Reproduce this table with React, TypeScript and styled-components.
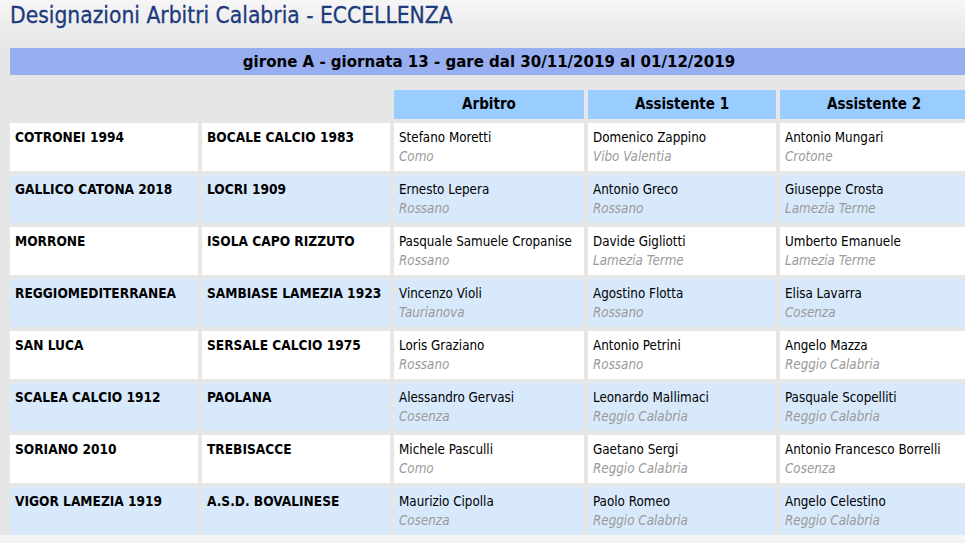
import styled, { createGlobalStyle } from 'styled-components'

type Official = { name: string; city: string }
type Match = { home: string; away: string; ref: Official; as1: Official; as2: Official }

const matches: Match[] = [
  {
    home: 'COTRONEI 1994',
    away: 'BOCALE CALCIO 1983',
    ref: { name: 'Stefano Moretti', city: 'Como' },
    as1: { name: 'Domenico Zappino', city: 'Vibo Valentia' },
    as2: { name: 'Antonio Mungari', city: 'Crotone' },
  },
  {
    home: 'GALLICO CATONA 2018',
    away: 'LOCRI 1909',
    ref: { name: 'Ernesto Lepera', city: 'Rossano' },
    as1: { name: 'Antonio Greco', city: 'Rossano' },
    as2: { name: 'Giuseppe Crosta', city: 'Lamezia Terme' },
  },
  {
    home: 'MORRONE',
    away: 'ISOLA CAPO RIZZUTO',
    ref: { name: 'Pasquale Samuele Cropanise', city: 'Rossano' },
    as1: { name: 'Davide Gigliotti', city: 'Lamezia Terme' },
    as2: { name: 'Umberto Emanuele', city: 'Lamezia Terme' },
  },
  {
    home: 'REGGIOMEDITERRANEA',
    away: 'SAMBIASE LAMEZIA 1923',
    ref: { name: 'Vincenzo Violi', city: 'Taurianova' },
    as1: { name: 'Agostino Flotta', city: 'Rossano' },
    as2: { name: 'Elisa Lavarra', city: 'Cosenza' },
  },
  {
    home: 'SAN LUCA',
    away: 'SERSALE CALCIO 1975',
    ref: { name: 'Loris Graziano', city: 'Rossano' },
    as1: { name: 'Antonio Petrini', city: 'Rossano' },
    as2: { name: 'Angelo Mazza', city: 'Reggio Calabria' },
  },
  {
    home: 'SCALEA CALCIO 1912',
    away: 'PAOLANA',
    ref: { name: 'Alessandro Gervasi', city: 'Cosenza' },
    as1: { name: 'Leonardo Mallimaci', city: 'Reggio Calabria' },
    as2: { name: 'Pasquale Scopelliti', city: 'Reggio Calabria' },
  },
  {
    home: 'SORIANO 2010',
    away: 'TREBISACCE',
    ref: { name: 'Michele Pasculli', city: 'Como' },
    as1: { name: 'Gaetano Sergi', city: 'Reggio Calabria' },
    as2: { name: 'Antonio Francesco Borrelli', city: 'Cosenza' },
  },
  {
    home: 'VIGOR LAMEZIA 1919',
    away: 'A.S.D. BOVALINESE',
    ref: { name: 'Maurizio Cipolla', city: 'Cosenza' },
    as1: { name: 'Paolo Romeo', city: 'Reggio Calabria' },
    as2: { name: 'Angelo Celestino', city: 'Reggio Calabria' },
  },
]

const GlobalStyle = createGlobalStyle`
  html, body {
    margin: 0;
    padding: 0;
    overflow: hidden;
  }
  body {
    background: linear-gradient(#f6f6f6 0px, #e6e6e6 45px, #e6e6e6 100%);
    font-family: 'DejaVu Sans Condensed', 'DejaVu Sans', Tahoma, sans-serif;
    font-size: 12px;
    color: #000;
  }
`

const Page = styled.div`
  padding: 0 0 0 10px;
  width: 958px;
`

const Title = styled.h1`
  color: #1d3a7c;
  font-size: 22.6px;
  font-weight: normal;
  height: 30px;
  line-height: 30px;
  margin: 0 0 18px;
  -webkit-text-stroke: 0.3px #1d3a7c;
  white-space: nowrap;
`

const Banner = styled.div`
  background: #97aef0;
  font-size: 16.7px;
  font-weight: bold;
  height: 27px;
  line-height: 27px;
  margin-bottom: 15px;
  text-align: center;
  white-space: nowrap;
`

const Grid = styled.div`
  display: grid;
  gap: 4px;
  grid-auto-rows: 48px;
  grid-template-columns: 188px 188px 190px 188px 188px;
  grid-template-rows: 29px;
`

const HeadCell = styled.div<{ $empty?: boolean }>`
  background: ${({ $empty }) => ($empty ? 'transparent' : '#99ccff')};
  font-size: 15px;
  font-weight: bold;
  line-height: 29px;
  text-align: center;
`

const Cell = styled.div<{ $alt: boolean }>`
  background: ${({ $alt }) => ($alt ? '#d8e9fc' : '#ffffff')};
  padding: 6px 5px 0;
  white-space: nowrap;
  overflow: hidden;
`

const Team = styled.div`
  font-size: 13.6px;
  font-weight: bold;
  line-height: 16px;
`

const Name = styled.div`
  font-size: 13.3px;
  line-height: 17px;
`

const City = styled.div`
  color: #9a9a9a;
  font-size: 13.3px;
  font-style: italic;
  line-height: 21px;
`

const Person = ({ o, alt }: { o: Official; alt: boolean }) => (
  <Cell $alt={alt}>
    <Name>{o.name}</Name>
    <City>{o.city}</City>
  </Cell>
)

export default function App() {
  return (
    <>
      <GlobalStyle />
      <Page>
        <Title>Designazioni Arbitri Calabria - ECCELLENZA</Title>
        <Banner>girone A - giornata 13 - gare dal 30/11/2019 al 01/12/2019</Banner>
        <Grid>
          <HeadCell $empty />
          <HeadCell $empty />
          <HeadCell>Arbitro</HeadCell>
          <HeadCell>Assistente 1</HeadCell>
          <HeadCell>Assistente 2</HeadCell>
          {matches.map((m, i) => {
            const alt = i % 2 === 1
            return [
              <Cell key={`h${i}`} $alt={alt}>
                <Team>{m.home}</Team>
              </Cell>,
              <Cell key={`a${i}`} $alt={alt}>
                <Team>{m.away}</Team>
              </Cell>,
              <Person key={`r${i}`} o={m.ref} alt={alt} />,
              <Person key={`s${i}`} o={m.as1} alt={alt} />,
              <Person key={`t${i}`} o={m.as2} alt={alt} />,
            ]
          })}
        </Grid>
      </Page>
    </>
  )
}
